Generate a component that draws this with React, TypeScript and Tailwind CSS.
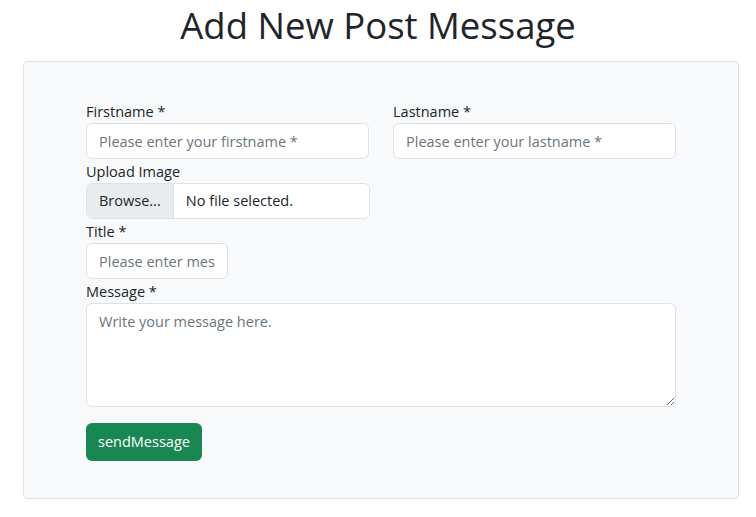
import React from "react";

const font = { fontFamily: '"Open Sans", "Noto Sans", sans-serif' };

const Field: React.FC<{ label: string; children: React.ReactNode }> = ({ label, children }) => (
  <div className="flex flex-col">
    <label className="h-6 pt-[2px] text-[14.5px] leading-[22px] text-[#212529]">{label}</label>
    {children}
  </div>
);

const inputCls =
  "h-9 rounded-md border border-[#dee2e6] bg-white px-3 text-[14.5px] text-[#212529] placeholder:text-[#6c757d] outline-none";

const App: React.FC = () => {
  return (
    <div className="min-h-screen bg-white" style={font}>
      <h1 className="text-center text-[36.5px] font-normal leading-[50px] text-[#212529]">
        Add New Post Message
      </h1>

      <div className="mx-[23px] mt-[11px] w-[716px] rounded border border-[#dee2e6] bg-[#f8f9fa] px-[62px] pt-[37px] pb-[37px]">
        <form className="flex flex-col">
          <div className="grid grid-cols-2 gap-6">
            <Field label="Firstname *">
              <input className={inputCls} placeholder="Please enter your firstname *" />
            </Field>
            <Field label="Lastname *">
              <input className={inputCls} placeholder="Please enter your lastname *" />
            </Field>
          </div>

          <div className="w-[284px]">
            <Field label="Upload Image">
              <div className="flex h-9 overflow-hidden rounded-md border border-[#dee2e6] bg-white text-[14.5px] text-[#212529]">
                <span className="flex items-center border-r border-[#dee2e6] bg-[#e9ecef] px-3">Browse...</span>
                <span className="flex items-center px-3">No file selected.</span>
              </div>
            </Field>
          </div>

          <div className="w-[142px]">
            <Field label="Title *">
              <input className={inputCls + " w-full"} placeholder="Please enter message title *" />
            </Field>
          </div>

          <Field label="Message *">
            <textarea
              className="h-[104px] rounded-md border border-[#dee2e6] bg-white px-3 py-[6px] text-[14.5px] leading-6 text-[#212529] placeholder:text-[#6c757d] outline-none"
              placeholder="Write your message here."
            />
          </Field>

          <div className="mt-4">
            <button
              type="button"
              className="h-[38px] rounded-md bg-[#198754] px-3 text-[14.5px] text-white"
            >
              sendMessage
            </button>
          </div>
        </form>
      </div>
    </div>
  );
};

export default App;
